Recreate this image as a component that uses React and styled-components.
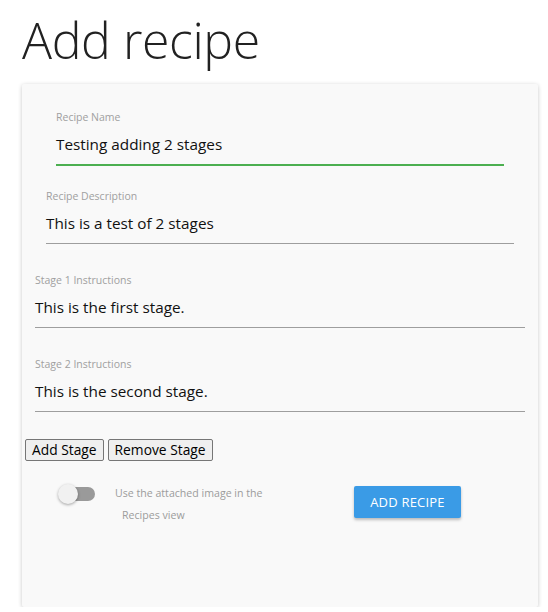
import React from 'react';
import styled, { createGlobalStyle } from 'styled-components';

const GlobalStyle = createGlobalStyle`
  body {
    margin: 0;
    background: #ffffff;
    font-family: "Open Sans", "Noto Sans", sans-serif;
  }
`;

const Page = styled.div`
  padding: 0 10px 0 22px;
`;

const Title = styled.h1`
  margin: 0;
  padding-top: 6px;
  height: 78px;
  font-size: 50px;
  font-weight: 300;
  line-height: 68px;
  color: #212121;
  letter-spacing: -0.4px;
`;

const Card = styled.form`
  box-sizing: border-box;
  width: 516px;
  height: 523px;
  padding-top: 25px;
  background: #f9f9f9;
  border-radius: 2px;
  box-shadow: 0 1px 4px rgba(0, 0, 0, 0.22);
`;

const Field = styled.div`
  margin: ${(p) => p.$top}px ${(p) => p.$inset}px 0;
`;

const Label = styled.div`
  height: 16px;
  margin-bottom: 3px;
  font-size: 10.5px;
  line-height: 16px;
  color: #a0a0a0;
`;

const Input = styled.div`
  padding: 6px 0 10px;
  font-size: 15.3px;
  line-height: 20px;
  color: #111111;
  border-bottom: ${(p) => (p.$focused ? '2px solid #4caf50' : '1px solid #9e9e9e')};
`;

const StageButtons = styled.div`
  display: flex;
  gap: 4px;
  margin: 27px 0 0 3px;
`;

const PlainButton = styled.button`
  height: 22px;
  padding: 0 6px;
  font-family: "Open Sans", sans-serif;
  font-size: 13.8px;
  line-height: 20px;
  color: #000;
  background: #efefef;
  border: 1px solid #767676;
  border-radius: 2px;
`;

const OptionsRow = styled.div`
  display: flex;
  align-items: flex-start;
  margin-top: 21px;
  padding-left: 38px;
`;

const Switch = styled.div`
  position: relative;
  width: 35px;
  height: 14px;
  margin-top: 5px;
  border-radius: 7px;
  background: #9a9a9a;
`;

const Thumb = styled.span`
  position: absolute;
  left: -2px;
  top: -3px;
  width: 20px;
  height: 20px;
  border-radius: 50%;
  background: #f1f1f1;
  box-shadow: 0 1px 3px rgba(0, 0, 0, 0.35);
`;

const SwitchText = styled.div`
  width: 160px;
  margin-left: 20px;
  font-size: 10.6px;
  line-height: 22px;
  color: #9c9c9c;
`;

const Indent = styled.span`
  padding-left: 7px;
`;

const PrimaryButton = styled.button`
  height: 32px;
  width: 107px;
  margin: 4px 0 0 79px;
  padding: 0;
  font-family: "Open Sans", sans-serif;
  font-size: 13px;
  letter-spacing: 0.2px;
  text-transform: uppercase;
  color: #ffffff;
  background: #3a9be6;
  border: none;
  border-radius: 2px;
  box-shadow: 0 2px 3px rgba(0, 0, 0, 0.25);
`;

const fields = [
  { label: 'Recipe Name', value: 'Testing adding 2 stages', inset: 34, top: 0, focused: true },
  { label: 'Recipe Description', value: 'This is a test of 2 stages', inset: 24, top: 22 },
  { label: 'Stage 1 Instructions', value: 'This is the first stage.', inset: 13, top: 28 },
  { label: 'Stage 2 Instructions', value: 'This is the second stage.', inset: 13, top: 28 },
];

const App = () => (
  <Page>
    <GlobalStyle />
    <Title>Add recipe</Title>
    <Card>
      {fields.map((f) => (
        <Field key={f.label} $inset={f.inset} $top={f.top}>
          <Label>{f.label}</Label>
          <Input $focused={f.focused}>{f.value}</Input>
        </Field>
      ))}
      <StageButtons>
        <PlainButton type="button">Add Stage</PlainButton>
        <PlainButton type="button">Remove Stage</PlainButton>
      </StageButtons>
      <OptionsRow>
        <Switch>
          <Thumb />
        </Switch>
        <SwitchText>
          Use the attached image in the
          <br />
          <Indent>Recipes view</Indent>
        </SwitchText>
        <PrimaryButton type="button">Add Recipe</PrimaryButton>
      </OptionsRow>
    </Card>
  </Page>
);

export default App;
